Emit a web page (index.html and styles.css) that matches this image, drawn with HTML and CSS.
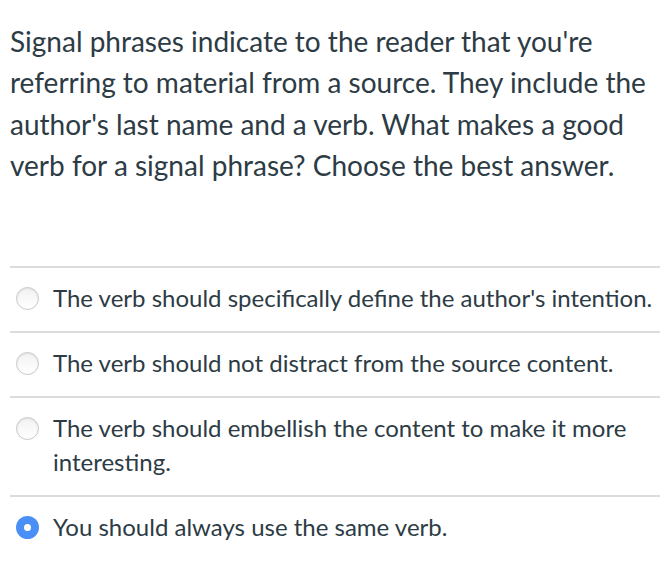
FILE: index.html
```html
<!DOCTYPE html>
<html>
<head>
<meta charset="utf-8">
<link rel="stylesheet" href="styles.css">
</head>
<body>
<div class="quiz">
  <p class="question">Signal phrases indicate to the reader that you're referring to material from a source. They include the author's last name and a verb. What makes a good verb for a signal phrase? Choose the best answer.</p>
  <div class="answers">
    <label class="answer"><span class="radio"></span><span class="text">The verb should specifically define the author's intention.</span></label>
    <label class="answer"><span class="radio"></span><span class="text">The verb should not distract from the source content.</span></label>
    <label class="answer"><span class="radio"></span><span class="text">The verb should embellish the content to make it more interesting.</span></label>
    <label class="answer"><span class="radio checked"></span><span class="text">You should always use the same verb.</span></label>
  </div>
</div>
</body>
</html>
```
FILE: styles.css
```css
html, body {
  margin: 0;
  padding: 0;
  background: #ffffff;
}
body {
  font-family: Lato, "Noto Sans", sans-serif;
  color: #2d3b45;
}
.quiz {
  padding: 21px 0 0 10px;
}
.question {
  margin: 0;
  font-size: 28px;
  line-height: 41.4px;
  padding-right: 0;
}
.answers {
  margin-top: 79px;
}
.answer {
  display: flex;
  align-items: flex-start;
  border-top: 2px solid #dcdcdc;
  padding: 13px 4px 16px 6px;
  font-size: 24px;
  line-height: 34px;
}
.radio {
  flex: none;
  width: 23px;
  height: 23px;
  margin: 6px 14px 0 0;
  border-radius: 50%;
  box-sizing: border-box;
  border: 1px solid #c8c8c8;
  background: linear-gradient(#f2f2f2, #ffffff);
  box-shadow: inset 0 1px 2px rgba(0,0,0,0.08);
}
.radio.checked {
  border: none;
  background: #4a8ff5;
  box-shadow: none;
  display: flex;
  align-items: center;
  justify-content: center;
}
.radio.checked::after {
  content: "";
  width: 7px;
  height: 7px;
  border-radius: 50%;
  background: #fff;
}
```
